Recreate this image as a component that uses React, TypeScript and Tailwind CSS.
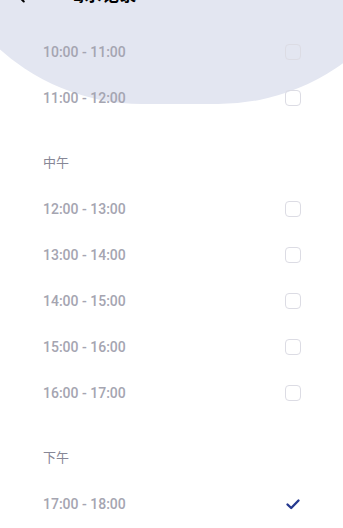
import { ChevronLeft } from 'lucide-react'

type Slot = { time: string; checked?: boolean }

const groups: { title?: string; slots: Slot[] }[] = [
  { slots: [{ time: '10:00 - 11:00' }, { time: '11:00 - 12:00' }] },
  {
    title: '中午',
    slots: [
      { time: '12:00 - 13:00' },
      { time: '13:00 - 14:00' },
      { time: '14:00 - 15:00' },
      { time: '15:00 - 16:00' },
      { time: '16:00 - 17:00' },
    ],
  },
  { title: '下午', slots: [{ time: '17:00 - 18:00', checked: true }] },
]

function Check({ checked }: { checked?: boolean }) {
  if (checked) {
    return (
      <svg width="16" height="16" viewBox="0 0 16 16" fill="none">
        <path
          d="M2.5 8.5 L6.2 12 L13.5 4.5"
          stroke="#25398f"
          strokeWidth="2.4"
          strokeLinecap="round"
          strokeLinejoin="round"
        />
      </svg>
    )
  }
  return <div className="w-4 h-4 rounded-[4px] border-[1.5px] border-[#dcdce4]" />
}

export default function App() {
  return (
    <div className="relative w-full h-[528px] overflow-hidden bg-white font-['Roboto','Noto_Sans_CJK_SC',sans-serif]">
      <div className="absolute left-[-70px] top-[-320px] w-[500px] h-[424px] rounded-full bg-[#e3e6f1]" />

      <div className="relative">
        <header className="h-[44px] mt-[-26px] flex items-center pl-[10px]">
          <ChevronLeft className="w-[22px] h-[22px] text-black" strokeWidth={2.2} />
          <h1 className="ml-[35px] text-[17px] font-bold text-black tracking-[0.5px]">喝水记录</h1>
        </header>

        <div className="pt-[11px]">
          {groups.map((g, gi) => (
            <section key={gi} className={gi > 0 ? 'pt-[19px]' : ''}>
              {g.title && (
                <div className="h-[46px] flex items-center px-[43px] text-[13px] text-[#878796]">
                  {g.title}
                </div>
              )}
              {g.slots.map((s) => (
                <div
                  key={s.time}
                  className="h-[46px] flex items-center justify-between pl-[43px] pr-[42px]"
                >
                  <span className="text-[14px] font-medium text-[#a5a5b1]">{s.time}</span>
                  <Check checked={s.checked} />
                </div>
              ))}
            </section>
          ))}
        </div>
      </div>
    </div>
  )
}
